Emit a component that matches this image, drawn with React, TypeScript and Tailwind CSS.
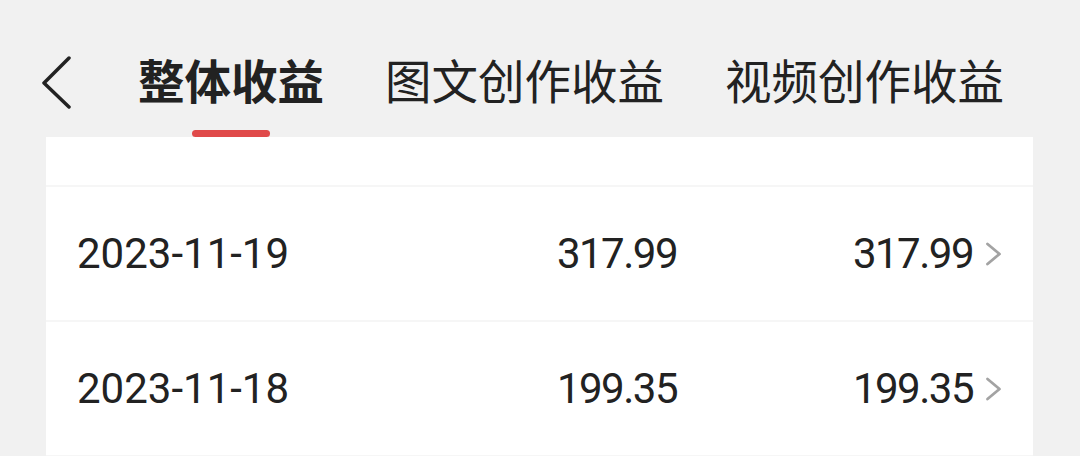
import React from 'react';

const rows = [
    { date: '2023-11-19', mid: '317.99', total: '317.99' },
    { date: '2023-11-18', mid: '199.35', total: '199.35' },
];

const tabs = ['整体收益', '图文创作收益', '视频创作收益'];

function BackIcon() {
    return (
        <svg width="30" height="54" viewBox="0 0 30 54" className="shrink-0">
            <path
                d="M27 2 L2 27 L27 51"
                fill="none"
                stroke="#222"
                strokeWidth="3.5"
                strokeLinecap="round"
                strokeLinejoin="round"
            />
        </svg>
    );
}

function Chevron() {
    return (
        <svg width="18" height="24" viewBox="0 0 18 24" className="shrink-0">
            <path
                d="M2.5 2 L14.5 12 L2.5 22"
                fill="none"
                stroke="#a3a3a3"
                strokeWidth="2.8"
                strokeLinecap="round"
                strokeLinejoin="round"
            />
        </svg>
    );
}

export default function App() {
    return (
        <div
            className="h-[456px] w-[1080px] overflow-hidden bg-[#f1f1f1] text-[#222]"
            style={{ fontFamily: '"Noto Sans CJK SC", "Noto Sans", sans-serif' }}
        >
            <div className="flex h-[137px] items-start pl-[42px] pt-[55px]">
                <div className="mr-[66px] mt-[1px]">
                    <BackIcon />
                </div>
                <div className="flex gap-[61px]">
                    {tabs.map((t, i) => (
                        <div key={t} className="flex flex-col items-center">
                            <span
                                className={
                                    'text-[46.5px] leading-[47px] whitespace-nowrap ' +
                                    (i === 0 ? 'font-bold' : 'font-normal')
                                }
                            >
                                {t}
                            </span>
                            {i === 0 && (
                                <div className="mt-[28px] h-[7px] w-[78px] rounded-full bg-[#e04a4a]" />
                            )}
                        </div>
                    ))}
                </div>
            </div>

            <div className="ml-[46px] mr-[47px] h-[319px] bg-white">
                <div className="h-[50px] border-b-2 border-[#f6f6f6]" />
                {rows.map((r) => (
                    <div
                        key={r.date}
                        className="flex h-[135px] items-center border-b-2 border-[#f6f6f6] pl-[31px] pr-[30px] text-[42px] text-[#222]"
                        style={{ fontFamily: 'Roboto, "Noto Sans CJK SC", sans-serif' }}
                    >
                        <div className="flex w-[600px] items-center justify-between">
                            <span>{r.date}</span>
                            <span className="tracking-[-1.5px]">{r.mid}</span>
                        </div>
                        <div className="flex flex-1 items-center justify-end gap-[12px]">
                            <span className="tracking-[-1.5px]">{r.total}</span>
                            <Chevron />
                        </div>
                    </div>
                ))}
            </div>
        </div>
    );
}
